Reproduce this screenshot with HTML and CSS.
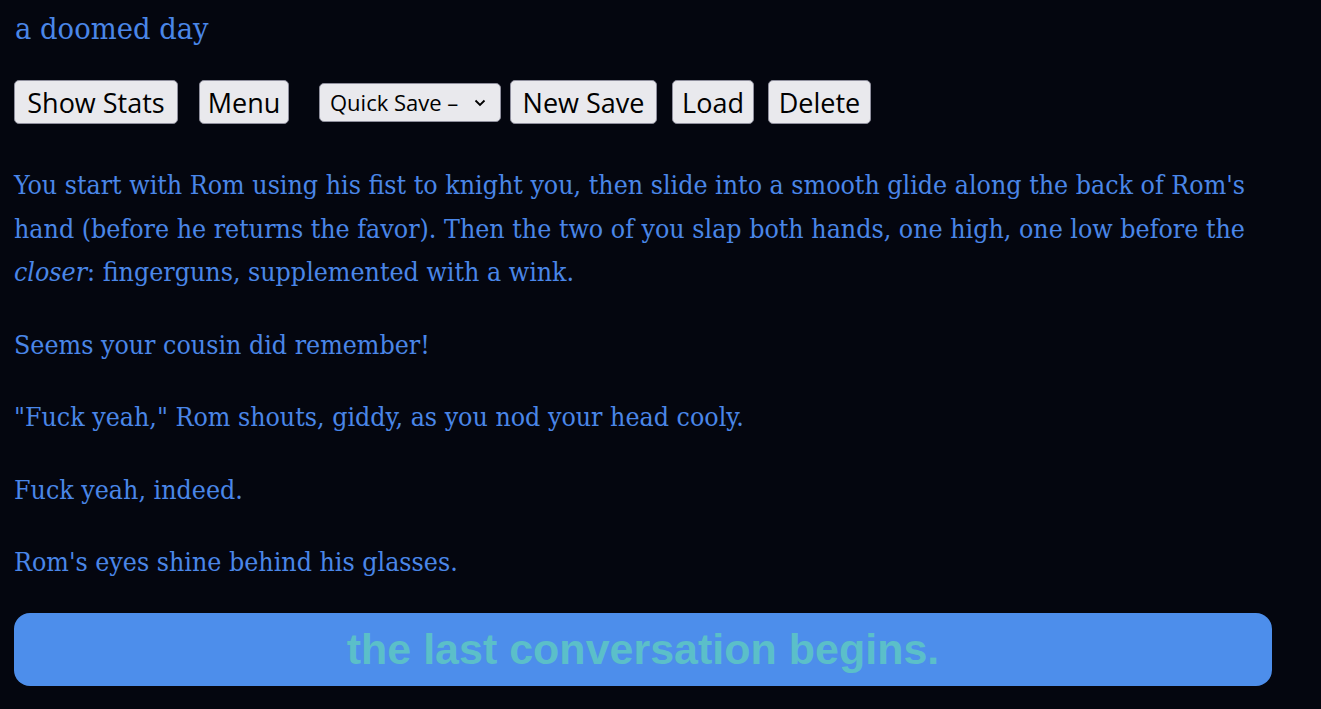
FILE: index.html
```html
<!doctype html>
<html lang="en">
<head>
  <meta charset="UTF-8">
  <title>a doomed day</title>
  <link rel="stylesheet" href="styles.css">
</head>
<body>
<div class="story">
  <div class="title">a doomed day</div>

  <div class="controls">
    <button class="btn btn-stats">Show Stats</button>
    <button class="btn btn-menu">Menu</button>
    <span class="slot-wrap">
      <select class="save-slot">
        <option>Quick Save &ndash;</option>
      </select>
      <svg class="slot-arrow" width="12" height="8" viewBox="0 0 12 8"><path d="M1.5 1.5 L6 6 L10.5 1.5" fill="none" stroke="#000" stroke-width="1.8"/></svg>
    </span>
    <button class="btn btn-new">New Save</button>
    <button class="btn btn-load">Load</button>
    <button class="btn btn-delete">Delete</button>
  </div>

  <div class="passage">
    <p>You start with Rom using his fist to knight you, then slide into a smooth glide along the back of Rom's hand (before he returns the favor). Then the two of you slap both hands, one high, one low before the <em>closer</em>: fingerguns, supplemented with a wink.</p>
    <p>Seems your cousin did remember!</p>
    <p>"Fuck yeah," Rom shouts, giddy, as you nod your head cooly.</p>
    <p>Fuck yeah, indeed.</p>
    <p>Rom's eyes shine behind his glasses.</p>
  </div>

  <a class="next-link" href="#">the last conversation begins.</a>
</div>
</body>
</html>
```

FILE: styles.css
```css
body {
  margin: 0;
  background: #04060f;
  color: #4a86e8;
  font-family: "DejaVu Serif Condensed", "DejaVu Serif", serif;
}

.story {
  width: 1258px;
  padding: 10px 14px 20px;
}

.title {
  font-size: 30.5px;
  line-height: 37px;
  margin-left: 1px;
}

.controls {
  display: flex;
  align-items: center;
  margin-top: 33px;
}

.btn {
  font-family: "Open Sans", "Noto Sans", sans-serif;
  font-size: 27px;
  height: 44px;
  padding: 0;
  color: #000;
  background: #e9e9ed;
  border: 1px solid #8f8f9d;
  border-radius: 5px;
  margin-right: 14px;
}

.btn-stats { width: 164px; margin-right: 21px; }
.btn-menu { width: 90px; margin-right: 30px; }
.btn-new { width: 147px; margin-right: 15px; }
.btn-load { width: 82px; }
.btn-delete { width: 103px; }

.slot-wrap {
  position: relative;
  margin-right: 9px;
}

.save-slot {
  -webkit-appearance: none;
  appearance: none;
  display: block;
  font-family: "Open Sans", "Noto Sans", sans-serif;
  font-size: 22px;
  width: 182px;
  height: 39px;
  padding: 0 0 0 10px;
  color: #000;
  background: #e9e9ed;
  border: 1px solid #8f8f9d;
  border-radius: 5px;
}

.slot-arrow {
  position: absolute;
  right: 15px;
  top: 16px;
  pointer-events: none;
}

.passage {
  margin-top: 39px;
}

.passage p {
  font-size: 26.5px;
  line-height: 43.5px;
  margin: 0 0 29px;
}

.next-link {
  display: block;
  height: 73px;
  line-height: 73px;
  background: #4d8eeb;
  border-radius: 16px;
  text-align: center;
  text-decoration: none;
  color: #5bbfc9;
  font-family: "Liberation Sans", Arial, sans-serif;
  font-weight: bold;
  font-size: 43px;
}
```
